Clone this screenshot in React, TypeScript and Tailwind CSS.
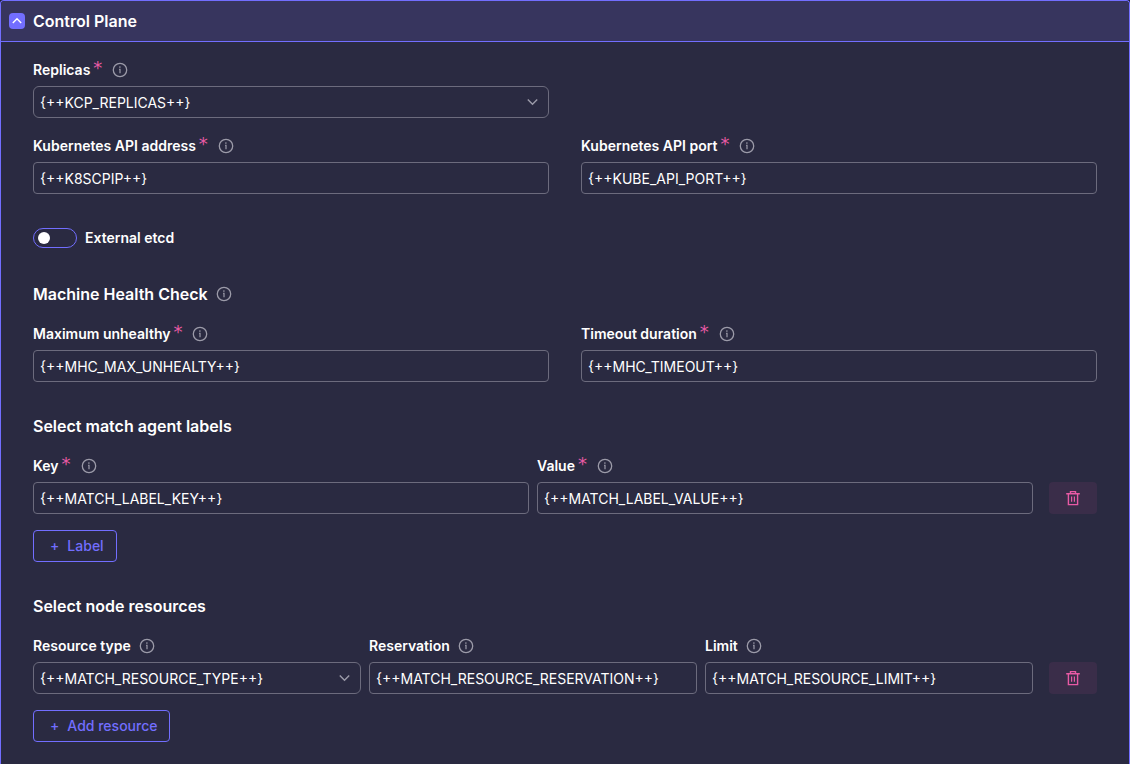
import React, { useState } from "react";

const InfoIcon = () => (
  <svg
    viewBox="0 0 16 16"
    className="size-4 shrink-0 text-[#9c9ba9]"
    fill="none"
    stroke="currentColor"
    aria-hidden="true"
  >
    <circle cx="8" cy="8" r="6.7" strokeWidth="1.3" />
    <path d="M7.1 7.3H8V11.3" strokeWidth="1.2" />
    <circle cx="7.9" cy="5.1" r="0.8" fill="currentColor" stroke="none" />
  </svg>
);

const TrashIcon = () => (
  <svg
    viewBox="0 0 16 16"
    className="size-4"
    fill="none"
    stroke="currentColor"
    strokeWidth="1.4"
    aria-hidden="true"
  >
    <path d="M1.2 3.8H14.8M5.5 3.8V1.6H10.5V3.8M3.4 3.8V14.6H12.6V3.8" />
    <path d="M6.6 6.5V11.7M9.4 6.5V11.7" strokeWidth="1.2" />
  </svg>
);

type FieldProps = {
  id: string;
  label: string;
  value: string;
  required?: boolean;
  select?: boolean;
};

const Field = ({ id, label, value, required, select }: FieldProps) => {
  return (
    <div className="min-w-0 flex-1">
      <div className="mb-1.5 flex h-5 items-center">
        <div className="flex h-5 items-start">
          <label htmlFor={id} className="text-sm font-semibold">
            {label}
          </label>
          {required && (
            <span className="ml-[3px] font-['DejaVu_Sans',sans-serif] text-lg leading-4 text-[#e85aa5]">
              *
            </span>
          )}
        </div>
        <span className={required ? "ml-2.5" : "ml-2"}>
          <InfoIcon />
        </span>
      </div>
      {select ? (
        <div className="relative">
          <select
            id={id}
            className="block h-8 w-full appearance-none rounded-md border border-[#6c6b7d] bg-transparent px-1.5 pt-0.5 text-sm"
          >
            <option>{value}</option>
          </select>
          <svg
            viewBox="0 0 16 16"
            className="pointer-events-none absolute top-2 right-2 size-4 text-[#9c9ba9]"
            fill="none"
            stroke="currentColor"
            strokeWidth="1.4"
            aria-hidden="true"
          >
            <path d="M2.8 5.4L7.5 10.2L12.2 5.4" />
          </svg>
        </div>
      ) : (
        <input
          id={id}
          type="text"
          defaultValue={value}
          className="block h-8 w-full rounded border border-[#6c6b7d] bg-transparent px-1.5 text-sm"
        />
      )}
    </div>
  );
};

const DeleteButton = ({ label }: { label: string }) => (
  <button
    type="button"
    aria-label={label}
    className="ml-2 flex h-8 w-12 shrink-0 items-center justify-center rounded bg-[#3a2d49] text-[#e85aa5]"
  >
    <TrashIcon />
  </button>
);

const AddButton = ({ label }: { label: string }) => (
  <button
    type="button"
    className="mt-4 flex h-8 items-center gap-2 rounded border border-[#726eff] pr-3 pl-4 text-sm font-medium text-[#726eff]"
  >
    <span>+</span>
    {label}
  </button>
);

const App = () => {
  const [external, setExternal] = useState(false);

  return (
    <div className="min-h-screen bg-[#1f1f30] font-['Inter',sans-serif] text-white">
      <section className="min-h-screen rounded-t border border-b-0 border-[#726eff] bg-[#2a2a41]">
        <header className="flex h-[41px] items-center gap-2 rounded-t border-b border-[#726eff] bg-[#37355e] px-2">
          <button
            type="button"
            aria-label="Collapse section"
            className="flex size-4 items-center justify-center rounded-sm bg-[#726eff]"
          >
            <svg
              viewBox="0 0 16 16"
              className="size-4"
              fill="none"
              stroke="currentColor"
              strokeWidth="1.4"
              aria-hidden="true"
            >
              <path d="M3.8 10L8 5.8L12.2 10" />
            </svg>
          </button>
          <h2 className="text-base font-semibold">Control Plane</h2>
        </header>

        <div className="px-8 py-[18px]">
          <div className="flex gap-8">
            <Field
              id="replicas"
              label="Replicas"
              value="{++KCP_REPLICAS++}"
              required
              select
            />
            <div className="flex-1" />
          </div>

          <div className="mt-[18px] flex gap-8">
            <Field
              id="api-address"
              label="Kubernetes API address"
              value="{++K8SCPIP++}"
              required
            />
            <Field
              id="api-port"
              label="Kubernetes API port"
              value="{++KUBE_API_PORT++}"
              required
            />
          </div>

          <label className="my-[34px] flex h-5 w-fit items-center gap-2 text-sm font-semibold">
            <input
              type="checkbox"
              role="switch"
              checked={external}
              onChange={(e) => setExternal(e.target.checked)}
              className="flex h-5 w-11 appearance-none items-center rounded-full border border-[#726eff] px-1 before:size-3 before:rounded-full before:bg-white checked:justify-end checked:bg-[#726eff]"
            />
            External etcd
          </label>

          <h3 className="flex items-center gap-2 text-base font-semibold">
            Machine Health Check
            <InfoIcon />
          </h3>
          <div className="mt-[18px] flex gap-8">
            <Field
              id="max-unhealthy"
              label="Maximum unhealthy"
              value="{++MHC_MAX_UNHEALTY++}"
              required
            />
            <Field
              id="timeout"
              label="Timeout duration"
              value="{++MHC_TIMEOUT++}"
              required
            />
          </div>

          <h3 className="mt-8 text-base font-semibold">
            Select match agent labels
          </h3>
          <div className="mt-[18px] flex items-end gap-2">
            <Field
              id="label-key"
              label="Key"
              value="{++MATCH_LABEL_KEY++}"
              required
            />
            <Field
              id="label-value"
              label="Value"
              value="{++MATCH_LABEL_VALUE++}"
              required
            />
            <DeleteButton label="Delete label" />
          </div>
          <AddButton label="Label" />

          <h3 className="mt-8 text-base font-semibold">
            Select node resources
          </h3>
          <div className="mt-[18px] flex items-end gap-2">
            <Field
              id="resource-type"
              label="Resource type"
              value="{++MATCH_RESOURCE_TYPE++}"
              select
            />
            <Field
              id="reservation"
              label="Reservation"
              value="{++MATCH_RESOURCE_RESERVATION++}"
            />
            <Field
              id="limit"
              label="Limit"
              value="{++MATCH_RESOURCE_LIMIT++}"
            />
            <DeleteButton label="Delete resource" />
          </div>
          <AddButton label="Add resource" />
        </div>
      </section>
    </div>
  );
};

export default App;
